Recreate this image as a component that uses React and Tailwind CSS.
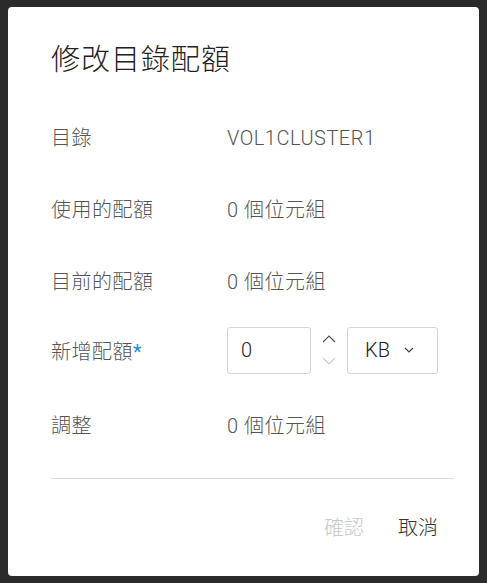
import React from 'react';

const rows = [
  { label: '目錄', value: 'VOL1CLUSTER1' },
  { label: '使用的配額', value: '0 個位元組' },
  { label: '目前的配額', value: '0 個位元組' },
];

function Chevron({ up, className }) {
  return (
    <svg width="14" height="8" viewBox="0 0 14 8" className={className}>
      <path
        d={up ? 'M1 7 L7 1 L13 7' : 'M1 1 L7 7 L13 1'}
        fill="none"
        stroke="currentColor"
        strokeWidth="1.2"
      />
    </svg>
  );
}

function Row({ label, children }) {
  return (
    <div className="grid grid-cols-[176px_1fr] items-center h-[72px]">
      <div className="text-[20px] text-[#555] tracking-[0.5px]">{label}</div>
      <div className="text-[20px] text-[#555] tracking-[0.5px]">{children}</div>
    </div>
  );
}

export default function App() {
  return (
    <div
      className="w-[487px] h-[583px] bg-[#2b2b2b] pt-[7px] pl-[8px] font-light"
      style={{ fontFamily: "Roboto, 'Noto Sans CJK TC', sans-serif" }}
    >
      <div className="w-[471px] h-[569px] bg-white rounded-[4px] pl-[43px] pr-[25px] pt-[33px]">
        <h1 className="text-[29px] leading-[40px] text-[#222] font-light tracking-[1px]">
          修改目錄配額
        </h1>

        <div className="mt-[22px]">
          {rows.map((r) => (
            <Row key={r.label} label={r.label}>
              {r.value}
            </Row>
          ))}

          <div className="grid grid-cols-[176px_1fr] items-center h-[64px]">
            <div className="text-[20px] text-[#555] tracking-[0.5px] pt-[4px]">
              新增配額<span className="text-[#1e88e5] font-normal">*</span>
            </div>
            <div className="flex items-center">
              <div className="w-[84px] h-[47px] border border-[#d4d4d4] rounded-[3px] flex items-center pl-[13px] text-[20px] text-[#222]">
                0
              </div>
              <div className="flex flex-col items-center gap-[14px] w-[36px]">
                <Chevron up className="text-[#555]" />
                <Chevron className="text-[#ccc]" />
              </div>
              <div className="w-[91px] h-[47px] border border-[#d4d4d4] rounded-[3px] flex items-center pl-[17px] gap-[14px] text-[20px] text-[#222]">
                KB
                <svg width="10" height="6" viewBox="0 0 10 6">
                  <path d="M1 1 L5 5 L9 1" fill="none" stroke="#444" strokeWidth="1.2" />
                </svg>
              </div>
            </div>
          </div>

          <div className="h-[8px]" />
          <Row label="調整">0 個位元組</Row>
        </div>

        <div className="mt-[16px] border-t border-[#ddd]" />

        <div className="flex justify-end items-center mt-[29px]">
          <button className="px-4 h-[40px] text-[20px] text-[#c8c8c8] mr-[2px]">確認</button>
          <button className="px-4 h-[40px] text-[20px] text-[#333]">取消</button>
        </div>
      </div>
    </div>
  );
}
